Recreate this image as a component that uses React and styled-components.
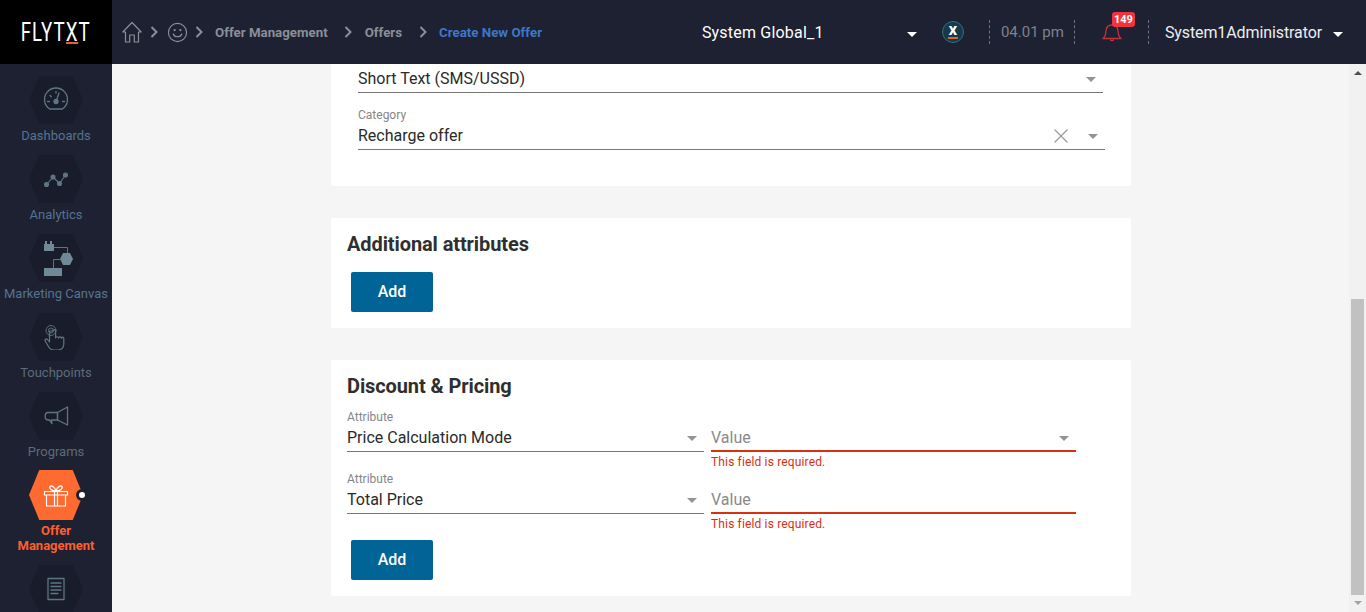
import React from 'react'
import styled, { createGlobalStyle } from 'styled-components'
import { X } from 'lucide-react'

const GlobalStyle = createGlobalStyle`
    html, body {
        margin:0;
        height:100%;
        overflow:hidden;
        background:#f5f5f5;
        font-family:Roboto, "Liberation Sans", sans-serif;
    }
    * { box-sizing:border-box; }
`

const Page = styled.div`
    width:100%;
    height:100vh;
    display:flex;
    flex-direction:column;
    overflow:hidden;
`
const Header = styled.header`
    flex:0 0 64px;
    display:flex;
    align-items:center;
    background-color:#1e2131;
`
const Logo = styled.div`
    width:112px;
    height:64px;
    background-color:#000;
    color:#fff;
    display:flex;
    align-items:center;
    justify-content:center;
`
const LogoText = styled.span`
    display:block;
    font-size:26px;
    font-weight:400;
    letter-spacing:1.5px;
    transform:scaleX(.72);
`
const LogoX = styled.span`
    position:relative;
    &::after {
        content:"";
        position:absolute;
        left:0;
        right:1px;
        bottom:3px;
        height:2px;
        background-color:#e0622c;
    }
`
const Breadcrumb = styled.nav`
    display:flex;
    align-items:center;
    padding-left:10px;
    color:#8b8f98;
    font-size:13.300px;
    font-weight:700;
    white-space:nowrap;
`
const Crumb = styled.span`
    color:${props => props.$active ? '#3f76cc' : '#8b8f98'};
`
const SepIcon = styled.svg`
    display:block;
    flex:none;
    margin:0 ${props => props.$right}px 0 ${props => props.$left}px;
`
const Sep = ({ left, right }) => (
    <SepIcon $left={left} $right={right} width="8" height="12" viewBox="0 0 8 12" fill="none" stroke="#8b8f98" strokeWidth="2">
        <path d="M1.500 1l5 5-5 5" />
    </SepIcon>
)
const HeaderRight = styled.div`
    margin-left:auto;
    display:flex;
    align-items:center;
    padding-right:23px;
    color:#fff;
    white-space:nowrap;
`
const Scope = styled.div`
    width:215px;
    display:flex;
    align-items:center;
    justify-content:space-between;
    font-size:16px;
    letter-spacing:.2px;
`
const Caret = styled.span`
    display:block;
    flex:none;
    width:0;
    height:0;
    margin-top:${props => props.$drop || 2}px;
    border-left:5px solid transparent;
    border-right:5px solid transparent;
    border-top:5px solid ${props => props.$color || '#949494'};
`
const Tenant = styled.div`
    width:22px;
    height:22px;
    margin-left:25px;
    border-radius:50%;
    background-color:#163a4c;
    border:1px solid #2f6f86;
    display:flex;
    align-items:center;
    justify-content:center;
`
const TenantMark = styled.span`
    display:block;
    color:#fff;
    font-size:13px;
    font-weight:900;
    line-height:11px;
    padding:0 1px 1px;
    border-bottom:2px solid #e0622c;
`
const Divider = styled.span`
    display:block;
    height:24px;
    margin-left:${props => props.$left}px;
    border-left:1px dashed #6e7280;
`
const Clock = styled.span`
    margin-left:11px;
    color:#7d828d;
    font-size:15px;
`
const Bell = styled.div`
    position:relative;
    margin-left:27px;
    width:20px;
    height:20px;
    color:#c4323c;
`
const Badge = styled.span`
    position:absolute;
    left:10px;
    top:-10px;
    width:23px;
    height:15px;
    border-radius:3px;
    background-color:#f2333d;
    color:#fff;
    font-size:11px;
    font-weight:700;
    line-height:15px;
    text-align:center;
`
const User = styled.span`
    margin-left:16px;
    margin-right:11px;
    font-size:16px;
    letter-spacing:-.1px;
    color:#eceef2;
`

const Body = styled.div`
    flex:1;
    min-height:0;
    display:flex;
`
const Sidebar = styled.aside`
    flex:0 0 112px;
    padding-top:12px;
    background-color:#1e2131;
    overflow:hidden;
`
const NavItem = styled.div`
    position:relative;
    height:${props => props.$active ? 94 : 79}px;
    display:flex;
    flex-direction:column;
    align-items:center;
    font-size:13px;
    font-weight:${props => props.$active ? 700 : 400};
    line-height:15px;
    text-align:center;
    white-space:nowrap;
    color:${props => props.$active ? '#ff5f2e' : props.$tone || '#557391'};
`
const Hexagon = styled.div`
    flex:none;
    width:54px;
    height:${props => props.$active ? 50 : 48}px;
    margin-top:${props => props.$active ? -1 : 0}px;
    margin-bottom:${props => props.$active ? 3 : 4}px;
    display:flex;
    align-items:center;
    justify-content:center;
    background-color:${props => props.$active ? '#ff6a30' : '#191c2a'};
    color:${props => props.$active ? '#fff' : '#5f7682'};
    clip-path:polygon(19% 0, 81% 0, 100% 50%, 81% 100%, 19% 100%, 0 50%);
`
const ActiveDot = styled.span`
    position:absolute;
    left:76px;
    top:18px;
    width:12px;
    height:12px;
    border-radius:50%;
    background-color:#fff;
    border:3px solid #1e2131;
`

const Main = styled.main`
    flex:1;
    min-width:0;
    padding-left:1px;
    display:flex;
    flex-direction:column;
    align-items:center;
    gap:32px;
    background-color:#f5f5f5;
`
const Card = styled.section`
    width:800px;
    padding:${props => props.$clipped ? '0 26px 36px 27px' : '14px 16px 16px'};
    background-color:#fff;
    border-radius:${props => props.$clipped ? '0 0 2px 2px' : '2px'};
`
const CardTitle = styled.h2`
    margin:0;
    font-size:20px;
    font-weight:700;
    letter-spacing:-.1px;
    line-height:24px;
    color:#2f2f2f;
`
const FieldRow = styled.div`
    display:flex;
    gap:7px;
    margin-top:${props => props.$top || 0}px;
`
const Field = styled.div`
    width:${props => props.$width}px;
    margin-top:${props => props.$top || 0}px;
`
const FieldLabel = styled.div`
    height:14px;
    font-size:12px;
    line-height:14px;
    color:#868686;
`
const Control = styled.div`
    height:${props => props.$height || 28}px;
    display:flex;
    align-items:center;
    gap:15px;
    padding-right:7px;
    border-bottom:${props => props.$error ? '2px solid #d9300f' : '1px solid #777'};
`
const ControlText = styled.span`
    flex:1;
    font-size:16px;
    color:${props => props.$placeholder ? '#8a8a8a' : '#2a2a2a'};
`
const ClearIcon = styled(X)`
    display:block;
    color:#9a9a9a;
`
const ErrorText = styled.div`
    height:20px;
    font-size:12px;
    line-height:20px;
    letter-spacing:.15px;
    color:#d9300f;
`
const AddButton = styled.button`
    display:block;
    width:82px;
    height:40px;
    margin:${props => props.$top}px 0 0 4px;
    padding:0 0 2px;
    border:none;
    border-radius:2px;
    background-color:#006496;
    color:#fff;
    font-family:inherit;
    font-size:16px;
    font-weight:500;
`

const Scrollbar = styled.div`
    flex:0 0 17px;
    display:flex;
    flex-direction:column;
    align-items:center;
    background-color:#f1f1f1;
`
const ArrowUp = styled.span`
    width:0;
    height:0;
    margin-top:7px;
    border-left:4px solid transparent;
    border-right:4px solid transparent;
    border-bottom:4px solid #4f4f4f;
`
const Thumb = styled.div`
    width:13px;
    height:296px;
    margin-top:224px;
    background-color:#c1c1c1;
`
const ArrowDown = styled.span`
    width:0;
    height:0;
    margin-top:6px;
    border-left:4px solid transparent;
    border-right:4px solid transparent;
    border-top:4px solid #a3a3a3;
`

const Icon = ({ size = 26, weight = 1.3, children }) => (
    <svg width={size} height={size} viewBox="0 0 26 26" fill="none" stroke="currentColor" strokeWidth={weight} strokeLinecap="round" strokeLinejoin="round">
        {children}
    </svg>
)

const GaugeIcon = () => (
    <Icon>
        <path d="M6.500 22a11.500 11.500 0 1 1 13 0z" />
        <circle cx="13" cy="14.500" r="2" fill="currentColor" />
        <path d="M13.600 13l2.400-7M4.500 14.500h2M19.500 14.500h2M7 8.500l1.300 1.300M13 4.500v1.500" />
    </Icon>
)
const AnalyticsIcon = () => (
    <Icon weight={1.1}>
        <path d="M3.500 18.500l6.500-7.500 6.500 6.500 6-8.500" />
        <circle cx="3.500" cy="18.500" r="2" fill="currentColor" />
        <circle cx="10" cy="11" r="2" fill="currentColor" />
        <circle cx="16.500" cy="17.500" r="2" fill="currentColor" />
        <circle cx="22.500" cy="9" r="2" fill="currentColor" />
    </Icon>
)
const CanvasIcon = () => (
    <svg width="36" height="35" viewBox="-6 0 36 35" fill="none" stroke="currentColor">
        <g fill="#6f8a96" stroke="none">
            <rect x="0" y="3" width="10" height="7" />
            <rect x="1" y="0" width="2" height="4" />
            <rect x="6" y="0" width="2" height="4" />
            <path d="M19 12h7l3 6-3 6h-7l-3-6z" />
            <rect x="0" y="27" width="18" height="8" />
        </g>
        <path d="M10 6.500h13.500V12M16 18.500H9.500V27" />
    </svg>
)
const TouchIcon = () => (
    <Icon weight={1.200}>
        <circle cx="8" cy="6.500" r="2.500" strokeWidth=".9" />
        <circle cx="8" cy="6.500" r="5" strokeWidth=".9" />
        <path d="M6.500 7v11l-2-2.500c-1.400-1.400-3.200.2-2.200 1.700l3.200 5.300c1.200 2.300 3.300 3.500 5.800 3.500h3.500c3.500 0 6-2.500 6-6v-5.500c0-1.800-2.400-1.800-2.500-.2 0-1.800-2.600-1.800-2.800-.2 0-1.800-2.700-1.800-2.900-.1V7c0-1.900-2.600-1.900-2.600 0z" />
    </Icon>
)
const MegaphoneIcon = () => (
    <Icon>
        <path d="M14.500 9.500L24.500 4v18l-10-5z" />
        <path d="M5 9.500h9.500V17H8.500l.5 3.500L6.500 17H5c-3.800-.2-3.800-7.300 0-7.500z" />
    </Icon>
)
const GiftIcon = () => (
    <Icon weight={1.200}>
        <path d="M1.500 9.500h23v3.500h-23zM3.500 13h19v11h-19zM11.500 9.500V24M14.500 9.500V24" />
        <path d="M13 9C10 9 6 7.500 7 4.500c1-2 5 .5 6 4.500 1-4 5-6.500 6-4.500 1 3-3 4.500-6 4.500z" />
    </Icon>
)
const DocumentIcon = () => (
    <Icon>
        <path d="M5 2.500h16v21H5zM8 7h10M8 10.500h10M8 14h10M8 17.500h7" />
    </Icon>
)

const navItems = [
    { label: 'Dashboards', icon: <GaugeIcon /> },
    { label: 'Analytics', icon: <AnalyticsIcon /> },
    { label: 'Marketing Canvas', icon: <CanvasIcon /> },
    { label: 'Touchpoints', icon: <TouchIcon />, tone: '#5d6b7a' },
    { label: 'Programs', icon: <MegaphoneIcon />, tone: '#5d6b7a' },
    { label: <>Offer<br />Management</>, icon: <GiftIcon />, active: true },
    { icon: <DocumentIcon /> },
]

const SelectField = ({ label, value, width, top, clearable, height }) => (
    <Field $width={width} $top={top}>
        {label && <FieldLabel>{label}</FieldLabel>}
        <Control $height={height}>
            <ControlText>{value}</ControlText>
            {clearable && <ClearIcon size={24} strokeWidth={1.3} />}
            <Caret />
        </Control>
    </Field>
)

const ValueField = ({ hideCaret }) => (
    <Field $width={365} $top={14}>
        <Control $error>
            <ControlText $placeholder>Value</ControlText>
            {!hideCaret && <Caret />}
        </Control>
        <ErrorText>This field is required.</ErrorText>
    </Field>
)

const App = () => {
    return (
        <Page>
            <GlobalStyle />
            <Header>
                <Logo>
                    <LogoText>FLYT<LogoX>X</LogoX>T</LogoText>
                </Logo>
                <Breadcrumb>
                    <svg width="20" height="22" viewBox="0 0 20 22" fill="none" stroke="#8b8f98" strokeWidth="1.2" strokeLinejoin="round">
                        <path d="M.8 11L10 1.500l9.200 9.500h-2.700v10h-4.200v-7H7.700v7H3.500V11z" />
                    </svg>
                    <Sep left={8} right={9} />
                    <svg width="21" height="21" viewBox="0 0 22 22" fill="none" stroke="#8b8f98" strokeWidth="1.2" strokeLinecap="round">
                        <circle cx="11" cy="11" r="9.500" />
                        <path d="M6.500 12.500c1.500 4 7.500 4 9 0" />
                        <circle cx="8" cy="8.500" r=".6" />
                        <circle cx="14" cy="8.500" r=".6" />
                    </svg>
                    <Sep left={7} right={12} />
                    <Crumb>Offer Management</Crumb>
                    <Sep left={16} right={13} />
                    <Crumb>Offers</Crumb>
                    <Sep left={17} right={12} />
                    <Crumb $active>Create New Offer</Crumb>
                </Breadcrumb>
                <HeaderRight>
                    <Scope>
                        System Global_1
                        <Caret $color="#fff" $drop={4} />
                    </Scope>
                    <Tenant><TenantMark>X</TenantMark></Tenant>
                    <Divider $left={25} />
                    <Clock>04.01 pm</Clock>
                    <Divider $left={10} />
                    <Bell>
                        <svg width="20" height="20" viewBox="0 0 20 20" fill="none" stroke="currentColor" strokeWidth="1.300" strokeLinejoin="round">
                            <path d="M1 16.500c2.500-2 2.800-4.500 3-7.500.2-3.500 2.500-6 6-6s5.800 2.500 6 6c.2 3 .5 5.500 3 7.500z" />
                            <path d="M8.500 17.500c.3 1.500 2.700 1.500 3 0" />
                        </svg>
                        <Badge>149</Badge>
                    </Bell>
                    <Divider $left={26} />
                    <User>System1Administrator</User>
                    <Caret $color="#fff" $drop={4} />
                </HeaderRight>
            </Header>
            <Body>
                <Sidebar>
                    {navItems.map((item, i) => (
                        <NavItem key={i} $active={item.active} $tone={item.tone}>
                            <Hexagon $active={item.active}>{item.icon}</Hexagon>
                            {item.label}
                            {item.active && <ActiveDot />}
                        </NavItem>
                    ))}
                </Sidebar>
                <Main>
                    <Card $clipped>
                        <SelectField value="Short Text (SMS/USSD)" width={745} height={29} />
                        <SelectField label="Category" value="Recharge offer" width={747} top={15} clearable />
                    </Card>
                    <Card>
                        <CardTitle>Additional attributes</CardTitle>
                        <AddButton $top={16}>Add</AddButton>
                    </Card>
                    <Card>
                        <CardTitle>Discount &amp; Pricing</CardTitle>
                        <FieldRow $top={12}>
                            <SelectField label="Attribute" value="Price Calculation Mode" width={357} />
                            <ValueField />
                        </FieldRow>
                        <FieldRow>
                            <SelectField label="Attribute" value="Total Price" width={357} />
                            <ValueField hideCaret />
                        </FieldRow>
                        <AddButton $top={6}>Add</AddButton>
                    </Card>
                </Main>
                <Scrollbar>
                    <ArrowUp />
                    <Thumb />
                    <ArrowDown />
                </Scrollbar>
            </Body>
        </Page>
    )
}

export default App
